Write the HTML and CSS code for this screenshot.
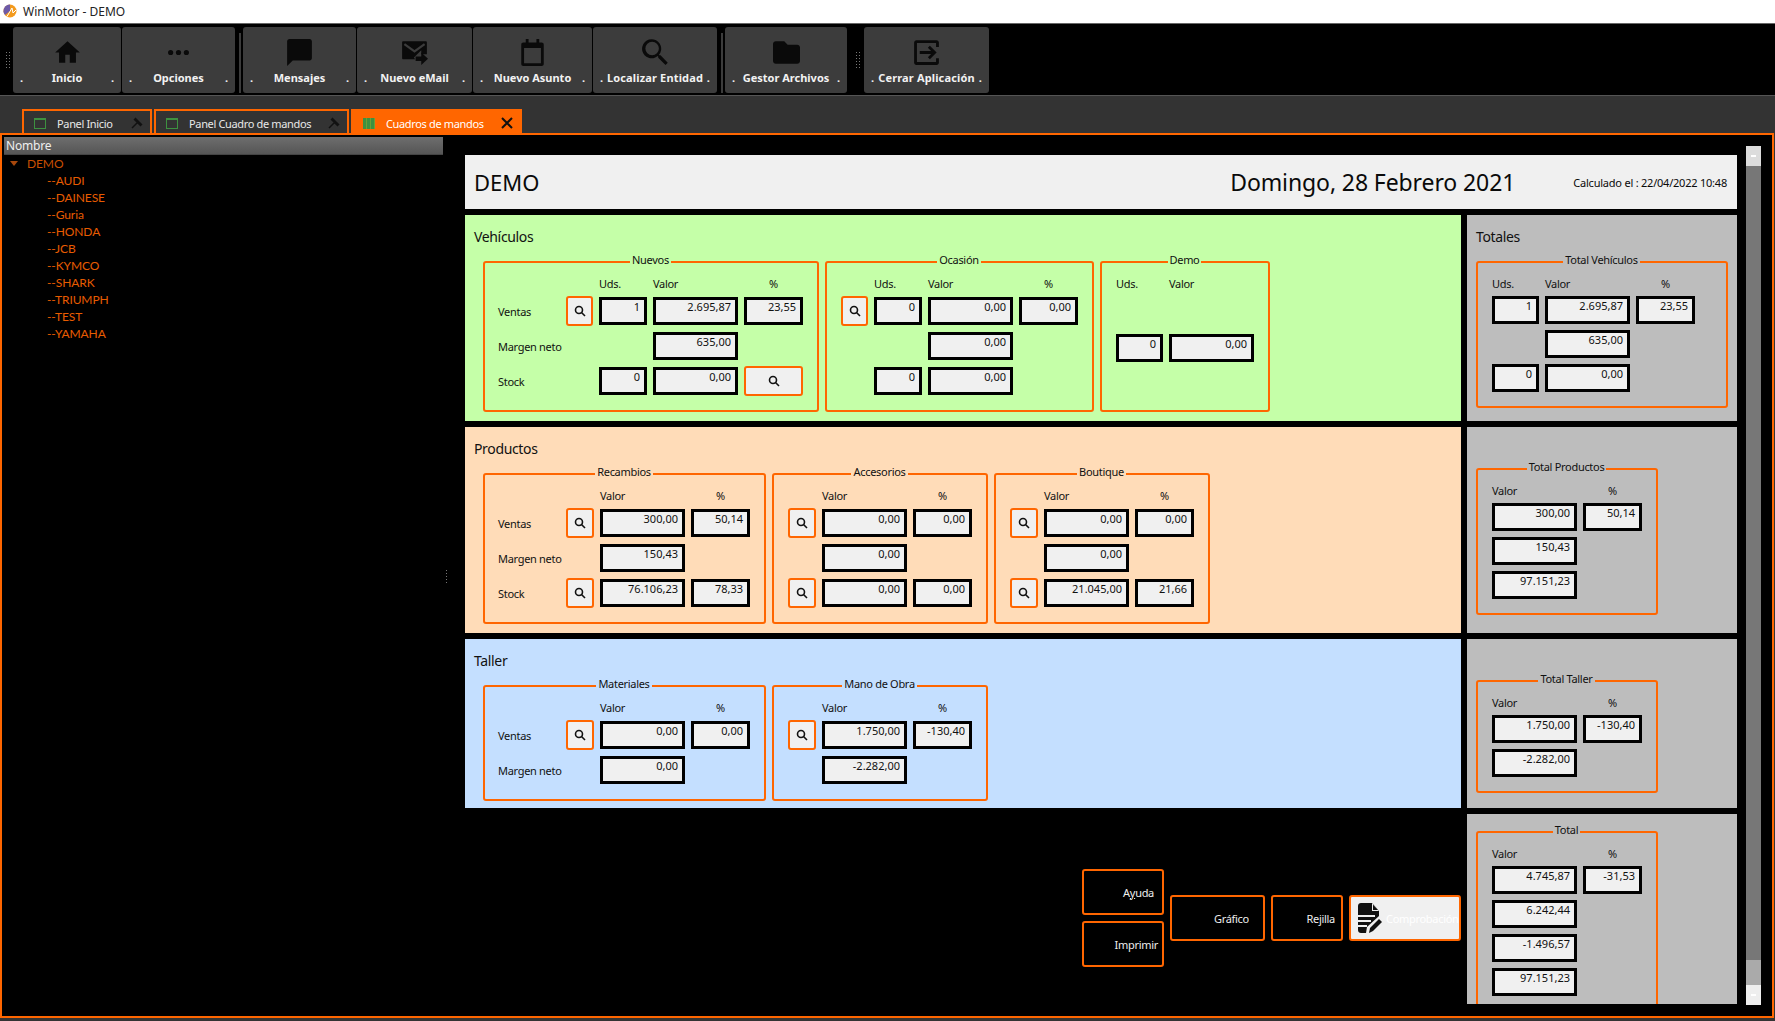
FILE: index.html
```html
<!DOCTYPE html>
<html lang="es">

<head>
    <meta charset="UTF-8">
    <title>WinMotor - DEMO</title>
    <link rel="stylesheet" href="styles.css">
</head>

<body>
    <header class="titlebar">
        <svg class="app-icon" viewBox="0 0 14 14"><circle cx="7" cy="7" r="6.5" fill="#f39a1d"/><path d="M7 .5a6.5 6.5 0 0 0-5 10.6L7 7z" fill="#6d5aa8"/><path d="M4 12.5 9 4l1 5 3-3" fill="none" stroke="#fff" stroke-width="1"/></svg>
        WinMotor - DEMO
    </header>

    <nav class="toolbar">
        <div class="grip"></div>
        <a class="tool tool-inicio">
            <svg viewBox="0 0 24 24"><path d="M10 21v-7h4v7h5.500v-9H23L12 2 1 12h3.500v9z"/></svg>
            <span class="tool-label"><b>.</b><b>Inicio</b><b>.</b></span>
        </a>
        <a class="tool tool-opciones">
            <svg viewBox="0 0 24 24"><circle cx="5" cy="12" r="2.300"/><circle cx="12" cy="12" r="2.300"/><circle cx="19" cy="12" r="2.300"/></svg>
            <span class="tool-label"><b>.</b><b>Opciones</b><b>.</b></span>
        </a>
        <div class="sep"></div>
        <a class="tool tool-mensajes">
            <svg viewBox="0 0 24 24"><path d="M21 0H3C1.900 0 1 .9 1 2v22l5-5h15c1.100 0 2-.9 2-2V2c0-1.100-.9-2-2-2z"/></svg>
            <span class="tool-label"><b>.</b><b>Mensajes</b><b>.</b></span>
        </a>
        <a class="tool tool-email">
            <svg viewBox="0 0 24 24"><path d="M2 2h20c.6 0 1 .4 1 1v10.500h-5V10l-6.500 6.500 1 1.500H2c-.6 0-1-.4-1-1V3c0-.6.4-1 1-1z"/><path d="M3 4.500 12 11l9-6.500" fill="none" stroke="#3c3c3c" stroke-width="2"/><path d="M18 12v3.500h-5v4h5V23l6-5.500z"/></svg>
            <span class="tool-label"><b>.</b><b>Nuevo eMail</b><b>.</b></span>
        </a>
        <a class="tool tool-asunto">
            <svg viewBox="0 0 24 24"><path d="M20 3h-2V0h-2.500v3h-7V0H6v3H4C2.700 3 2 3.800 2 5v17c0 1.200.7 2 2 2h16c1.300 0 2-.8 2-2V5c0-1.200-.7-2-2-2zm-.5 18.500h-15V8h15z"/></svg>
            <span class="tool-label"><b>.</b><b>Nuevo Asunto</b><b>.</b></span>
        </a>
        <a class="tool tool-localizar">
            <svg viewBox="0 0 24 24"><path d="M16.500 14.500h-1l-.4-.4A8.500 8.500 0 1 0 14 15.200l.4.4v1l6.500 6.400 2-2zm-7.500 0a6 6 0 1 1 0-12 6 6 0 0 1 0 12z"/></svg>
            <span class="tool-label"><b>.</b><b>Localizar Entidad</b><b>.</b></span>
        </a>
        <div class="sep"></div>
        <a class="tool tool-gestor">
            <svg viewBox="0 0 24 24"><path d="M10 2H2.500C1.100 2 0 3.100 0 4.500v15C0 20.900 1.100 22 2.500 22h19c1.400 0 2.500-1.100 2.500-2.500v-12C24 6.100 22.900 5 21.500 5H13z"/></svg>
            <span class="tool-label"><b>.</b><b>Gestor Archivos</b><b>.</b></span>
        </a>
        <div class="grip grip-mid"></div>
        <a class="tool tool-cerrar">
            <svg viewBox="0 0 24 24"><path d="M3 1h18c1.100 0 2 .9 2 2v4h-2.500V3.500h-17v17h17V17H23v4c0 1.100-.9 2-2 2H3c-1.100 0-2-.9-2-2V3c0-1.100.9-2 2-2z"/><path d="M15 6l-1.800 1.800 2.900 2.900H6v2.600h10.100l-2.900 2.900L15 18l6-6z"/></svg>
            <span class="tool-label"><b>.</b><b>Cerrar Aplicación</b><b>.</b></span>
        </a>
    </nav>

    <div class="tabstrip">
        <div class="tab tab-inicio">
            <span class="win-icon"></span>
            <span class="tab-text">Panel Inicio</span>
            <svg class="pin" viewBox="0 0 12 12"><path d="M1 11 8 4M4 1l7 7M3 2 10 9" stroke="#111" stroke-width="1.500" fill="none"/></svg>
        </div>
        <div class="tab tab-panel">
            <span class="win-icon"></span>
            <span class="tab-text">Panel Cuadro de mandos</span>
            <svg class="pin" viewBox="0 0 12 12"><path d="M1 11 8 4M4 1l7 7M3 2 10 9" stroke="#111" stroke-width="1.500" fill="none"/></svg>
        </div>
        <div class="tab tab-active">
            <span class="win-icon win-icon-on"></span>
            <span class="tab-text">Cuadros de mandos</span>
            <svg class="pin" viewBox="0 0 12 12"><path d="M1 1l10 10M11 1 1 11" stroke="#111" stroke-width="2" fill="none"/></svg>
        </div>
    </div>

    <div class="frame">
        <aside class="tree">
            <div class="tree-head">Nombre</div>
            <div class="tree-root"><span class="caret"></span>DEMO</div>
            <div class="tree-item">--AUDI</div>
            <div class="tree-item">--DAINESE</div>
            <div class="tree-item">--Guria</div>
            <div class="tree-item">--HONDA</div>
            <div class="tree-item">--JCB</div>
            <div class="tree-item">--KYMCO</div>
            <div class="tree-item">--SHARK</div>
            <div class="tree-item">--TRIUMPH</div>
            <div class="tree-item">--TEST</div>
            <div class="tree-item">--YAMAHA</div>
        </aside>

        <div class="splitter"><div class="splitter-grip"></div></div>

        <main class="dash">
            <div class="dash-head">
                <h1>DEMO</h1>
                <div class="dash-date">Domingo, 28 Febrero 2021</div>
                <div class="dash-calc">Calculado el : 22/04/2022 10:48</div>
            </div>

            <div class="dash-grid">
                <!-- Vehiculos -->
                <section class="panel green">
                    <h2>Vehículos</h2>
                    <div class="groups">
                        <fieldset class="fs fs-nuevos">
                            <legend>Nuevos</legend>
                            <span></span><span></span><span>Uds.</span><span>Valor</span><span class="pct">%</span>
                            <span class="lbl">Ventas</span><button class="find"><svg viewBox="0 0 12 12"><circle cx="5" cy="5" r="3.500"/><path d="M7.500 7.500 11 11"/></svg></button><div class="val">1</div><div class="val">2.695,87</div><div class="val">23,55</div>
                            <span class="lbl">Margen neto</span><span></span><span></span><div class="val">635,00</div><span></span>
                            <span class="lbl">Stock</span><span></span><div class="val">0</div><div class="val">0,00</div><button class="find"><svg viewBox="0 0 12 12"><circle cx="5" cy="5" r="3.500"/><path d="M7.500 7.500 11 11"/></svg></button>
                        </fieldset>
                        <fieldset class="fs fs-ocasion">
                            <legend>Ocasión</legend>
                            <span></span><span>Uds.</span><span>Valor</span><span class="pct">%</span>
                            <button class="find"><svg viewBox="0 0 12 12"><circle cx="5" cy="5" r="3.500"/><path d="M7.500 7.500 11 11"/></svg></button><div class="val">0</div><div class="val">0,00</div><div class="val">0,00</div>
                            <span></span><span></span><div class="val">0,00</div><span></span>
                            <span></span><div class="val">0</div><div class="val">0,00</div><span></span>
                        </fieldset>
                        <fieldset class="fs fs-demo">
                            <legend>Demo</legend>
                            <span>Uds.</span><span>Valor</span>
                            <span></span><span></span>
                            <div class="val">0</div><div class="val">0,00</div>
                        </fieldset>
                    </div>
                </section>
                <section class="panel side">
                    <h2>Totales</h2>
                    <fieldset class="fs fs-totveh">
                        <legend>Total Vehículos</legend>
                        <span>Uds.</span><span>Valor</span><span class="pct">%</span>
                        <div class="val">1</div><div class="val">2.695,87</div><div class="val">23,55</div>
                        <span></span><div class="val">635,00</div><span></span>
                        <div class="val">0</div><div class="val">0,00</div><span></span>
                    </fieldset>
                </section>

                <!-- Productos -->
                <section class="panel peach">
                    <h2>Productos</h2>
                    <div class="groups">
                        <fieldset class="fs fs-lab">
                            <legend>Recambios</legend>
                            <span></span><span></span><span>Valor</span><span class="pct">%</span>
                            <span class="lbl">Ventas</span><button class="find"><svg viewBox="0 0 12 12"><circle cx="5" cy="5" r="3.500"/><path d="M7.500 7.500 11 11"/></svg></button><div class="val">300,00</div><div class="val">50,14</div>
                            <span class="lbl">Margen neto</span><span></span><div class="val">150,43</div><span></span>
                            <span class="lbl">Stock</span><button class="find"><svg viewBox="0 0 12 12"><circle cx="5" cy="5" r="3.500"/><path d="M7.500 7.500 11 11"/></svg></button><div class="val">76.106,23</div><div class="val">78,33</div>
                        </fieldset>
                        <fieldset class="fs fs-plain">
                            <legend>Accesorios</legend>
                            <span></span><span>Valor</span><span class="pct">%</span>
                            <button class="find"><svg viewBox="0 0 12 12"><circle cx="5" cy="5" r="3.500"/><path d="M7.500 7.500 11 11"/></svg></button><div class="val">0,00</div><div class="val">0,00</div>
                            <span></span><div class="val">0,00</div><span></span>
                            <button class="find"><svg viewBox="0 0 12 12"><circle cx="5" cy="5" r="3.500"/><path d="M7.500 7.500 11 11"/></svg></button><div class="val">0,00</div><div class="val">0,00</div>
                        </fieldset>
                        <fieldset class="fs fs-plain">
                            <legend>Boutique</legend>
                            <span></span><span>Valor</span><span class="pct">%</span>
                            <button class="find"><svg viewBox="0 0 12 12"><circle cx="5" cy="5" r="3.500"/><path d="M7.500 7.500 11 11"/></svg></button><div class="val">0,00</div><div class="val">0,00</div>
                            <span></span><div class="val">0,00</div><span></span>
                            <button class="find"><svg viewBox="0 0 12 12"><circle cx="5" cy="5" r="3.500"/><path d="M7.500 7.500 11 11"/></svg></button><div class="val">21.045,00</div><div class="val">21,66</div>
                        </fieldset>
                    </div>
                </section>
                <section class="panel side side-notitle">
                    <fieldset class="fs fs-tot">
                        <legend>Total Productos</legend>
                        <span>Valor</span><span class="pct">%</span>
                        <div class="val">300,00</div><div class="val">50,14</div>
                        <div class="val">150,43</div><span></span>
                        <div class="val">97.151,23</div><span></span>
                    </fieldset>
                </section>

                <!-- Taller -->
                <section class="panel blue">
                    <h2>Taller</h2>
                    <div class="groups">
                        <fieldset class="fs fs-lab">
                            <legend>Materiales</legend>
                            <span></span><span></span><span>Valor</span><span class="pct">%</span>
                            <span class="lbl">Ventas</span><button class="find"><svg viewBox="0 0 12 12"><circle cx="5" cy="5" r="3.500"/><path d="M7.500 7.500 11 11"/></svg></button><div class="val">0,00</div><div class="val">0,00</div>
                            <span class="lbl">Margen neto</span><span></span><div class="val">0,00</div><span></span>
                        </fieldset>
                        <fieldset class="fs fs-plain">
                            <legend>Mano de Obra</legend>
                            <span></span><span>Valor</span><span class="pct">%</span>
                            <button class="find"><svg viewBox="0 0 12 12"><circle cx="5" cy="5" r="3.500"/><path d="M7.500 7.500 11 11"/></svg></button><div class="val">1.750,00</div><div class="val">-130,40</div>
                            <span></span><div class="val">-2.282,00</div><span></span>
                        </fieldset>
                    </div>
                </section>
                <section class="panel side side-notitle">
                    <fieldset class="fs fs-tot">
                        <legend>Total Taller</legend>
                        <span>Valor</span><span class="pct">%</span>
                        <div class="val">1.750,00</div><div class="val">-130,40</div>
                        <div class="val">-2.282,00</div><span></span>
                    </fieldset>
                </section>

                <!-- botones y total general -->
                <div class="actions">
                    <div class="action-col">
                        <button class="action action-small">A<u>y</u>uda</button>
                        <button class="action action-small action-print">Imprimir</button>
                    </div>
                    <button class="action action-chart"><span class="clip">Gráficos</span></button>
                    <button class="action action-grid">Rejilla</button>
                    <button class="action action-check">
                        <svg viewBox="0 0 24 30"><path d="M3 0h11l7 8v5L9 24l-1 6H3c-1.700 0-3-1.300-3-3V3c0-1.700 1.300-3 3-3z" fill="#111"/><path d="M14 0v8h7z" fill="#f0f0f0"/><path d="M15 1.500V7h5z" fill="#111"/><path d="M0 13h17M0 18h13M0 23h9" stroke="#f0f0f0" stroke-width="2"/><path d="M11 30l1-5 9-9 3 3-9 9z" fill="#111"/></svg>
                        <span>Comprobación</span>
                    </button>
                </div>
                <section class="panel side side-total">
                    <fieldset class="fs fs-tot fs-grand">
                        <legend>Total</legend>
                        <span>Valor</span><span class="pct">%</span>
                        <div class="val">4.745,87</div><div class="val">-31,53</div>
                        <div class="val">6.242,44</div><span></span>
                        <div class="val">-1.496,57</div><span></span>
                        <div class="val">97.151,23</div><span></span>
                    </fieldset>
                </section>
            </div>
        </main>

        <div class="scrollbar">
            <div class="scroll-arrow"></div>
            <div class="scroll-track"></div>
            <div class="scroll-thumb"></div>
            <div class="scroll-arrow scroll-arrow-end"></div>
        </div>
    </div>
</body>

</html>
```

FILE: styles.css
```css
* {
    box-sizing: border-box;
}

html, body {
    height: 100%;
}

body {
    margin: 0;
    height: 1021px;
    overflow: hidden;
    background-color: #333;
    font-family: "Noto Sans", sans-serif;
    font-size: 11px;
    color: #111;
}

/* title bar */
.titlebar {
    height: 24px;
    display: flex;
    align-items: center;
    gap: 6px;
    padding: 0 0 1px 3px;
    background-color: #fff;
    border-bottom: 1px solid #666;
    font-size: 12px;
    color: #222;
}

.app-icon {
    width: 14px;
    height: 14px;
}

/* toolbar */
.toolbar {
    height: 71px;
    display: flex;
    align-items: flex-start;
    padding: 3px 0 0 5px;
    background-color: #000;
}

.grip {
    width: 6px;
    height: 18px;
    margin: 24px 2px 0 0;
    background-image: radial-gradient(#777 1px, transparent 1px);
    background-size: 3px 3px;
}

.grip-mid {
    margin: 24px 3px 0 7px;
}

.sep {
    width: 2px;
    height: 60px;
    margin: 6px 2px 0 3px;
    background-color: #3c3c3c;
}

.tool {
    height: 66px;
    margin-right: 1px;
    display: flex;
    flex-direction: column;
    align-items: center;
    padding: 12px 7px 0;
    background-color: #3c3c3c;
    border-radius: 3px;
}

.tool svg {
    width: 27px;
    height: 27px;
    fill: #0a0a0a;
}

.tool-label {
    width: 100%;
    margin-top: 4px;
    display: flex;
    justify-content: space-between;
    color: #f2f2f2;
    font-size: 11px;
    line-height: 16px;
    white-space: nowrap;
}

.tool-inicio { width: 108px; }
.tool-opciones { width: 113px; }
.tool-mensajes { width: 113px; }
.tool-email { width: 115px; }
.tool-asunto { width: 119px; }
.tool-localizar { width: 124px; }
.tool-gestor { width: 122px; }
.tool-cerrar { width: 125px; }

.tool-localizar .tool-label,
.tool-cerrar .tool-label {
    letter-spacing: .15px;
}

/* tabs */
.tabstrip {
    height: 38px;
    display: flex;
    align-items: flex-end;
    gap: 2px;
    padding-left: 22px;
    background-color: #333;
    border-top: 1px solid #555;
}

.tab {
    height: 26px;
    margin-bottom: -2px;
    display: flex;
    align-items: center;
    padding: 0 7px 0 10px;
    border: 2px solid #ff6600;
    border-bottom: 0;
    color: #e8e8e8;
}

.tab-inicio { width: 130px; }
.tab-panel { width: 195px; }

.tab-active {
    width: 171px;
    background-color: #ff6600;
    color: #fff;
}

.tab-text {
    flex: 1;
    margin-left: 11px;
    letter-spacing: -.35px;
    white-space: nowrap;
}

.win-icon {
    width: 12px;
    height: 11px;
    border: 1px solid #3d9140;
    border-top-width: 2px;
}

.win-icon-on {
    border: 0;
    background: repeating-linear-gradient(90deg, #3d9140 0 3px, #6aa038 3px 4px);
}

.pin {
    width: 12px;
    height: 12px;
}

/* main frame */
.frame {
    height: 885px;
    width: 1774px;
    display: flex;
    align-items: flex-start;
    background-color: #000;
    border: 2px solid #ff6600;
}

.tree {
    width: 441px;
    height: 100%;
    padding: 2px 0 0 2px;
}

.tree-head {
    height: 18px;
    padding-left: 2px;
    background: linear-gradient(#6e6e6e, #555);
    border-bottom: 1px solid #444;
    color: #eee;
    font-size: 12px;
    line-height: 18px;
    letter-spacing: -.2px;
}

.tree-root,
.tree-item {
    height: 17px;
    font-family: Lato, sans-serif;
    font-size: 12px;
    line-height: 17px;
    letter-spacing: -.1px;
}

.tree-root {
    padding-left: 23px;
    position: relative;
    color: #c94f00;
}

.tree-item {
    padding-left: 43px;
    color: #e85c00;
}

.caret {
    position: absolute;
    left: 6px;
    top: 6px;
    border: 4px solid transparent;
    border-top: 5px solid #a8480c;
}

.splitter {
    width: 22px;
    height: 100%;
    padding: 434px 0 0 2px;
}

.splitter-grip {
    width: 3px;
    height: 16px;
    background-image: radial-gradient(#777 1px, transparent 1px);
    background-size: 3px 3px;
}

.dash {
    width: 1272px;
    height: 870px;
    padding-top: 20px;
    overflow: hidden;
}

.dash-head {
    height: 54px;
    display: flex;
    align-items: center;
    padding: 0 10px 0 9px;
    background-color: #f0f0f0;
    color: #0a0a0a;
}

.dash-head h1 {
    flex: 1;
    margin: 0;
    font-size: 22px;
    font-weight: 400;
}

.dash-date {
    margin-right: 58px;
    font-size: 23px;
    letter-spacing: -.1px;
}

.dash-calc {
    font-size: 11px;
    letter-spacing: -.22px;
}

.dash-grid {
    margin-top: 6px;
    display: grid;
    grid-template-columns: 996px 270px;
    grid-template-rows: 206px 206px 169px 190px;
    column-gap: 6px;
    row-gap: 6px;
}

/* panels */
.panel {
    padding: 12px 9px 0;
    overflow: hidden;
}

.panel h2 {
    height: 20px;
    margin: 0 0 6px;
    font-size: 14px;
    font-weight: 400;
    line-height: 20px;
    letter-spacing: -.35px;
}

.green { background-color: #c5ffa8; }
.peach { background-color: #ffdcb8; }
.blue { background-color: #c4dfff; }
.side { background-color: #bdbdbd; }

.side-notitle { padding-top: 33px; }
.side-total { padding-top: 9px; }

.groups {
    display: flex;
    gap: 6px;
    margin-left: 9px;
}

/* field groups */
.fs {
    margin: 0;
    min-width: 0;
    display: grid;
    grid-auto-rows: 28px;
    grid-template-rows: 14px;
    column-gap: 6px;
    row-gap: 7px;
    padding: 5px 15px 15px 14px;
    border: 2px solid #ff6600;
    border-radius: 3px;
    line-height: 14px;
}

.fs legend {
    margin: 0 auto;
    padding: 0 2px 4px;
    font-size: 11px;
    line-height: 14px;
    letter-spacing: -.3px;
    color: #111;
}

.fs > span {
    padding-top: 1px;
    letter-spacing: -.3px;
}

.fs-nuevos {
    width: 336px;
    grid-template-columns: 61px 27px 48px 85px 59px;
}

.fs-ocasion {
    width: 269px;
    grid-template-columns: 27px 48px 85px 59px;
}

.fs-demo {
    width: 170px;
    grid-template-columns: 47px 85px;
    grid-template-rows: 14px 30px;
}

.fs-lab {
    width: 283px;
    grid-template-columns: 61px 28px 85px 59px;
}

.fs-plain {
    width: 216px;
    grid-template-columns: 28px 85px 59px;
}

.fs-totveh {
    width: 252px;
    grid-template-columns: 47px 85px 59px;
    row-gap: 6px;
    padding-bottom: 14px;
}

.fs-tot {
    width: 182px;
    grid-template-columns: 85px 59px;
    row-gap: 6px;
    padding-bottom: 14px;
}

.fs-grand {
    padding-bottom: 30px;
}

.pct {
    text-align: center;
}

.lbl {
    align-self: center;
    margin-left: -1px;
    white-space: nowrap;
}

.val {
    padding-right: 4px;
    background-color: #f0f0f0;
    border: 3px solid #000;
    text-align: right;
    line-height: 14px;
    white-space: nowrap;
}

.find {
    height: 30px;
    margin: -1px 0;
    padding: 0;
    display: flex;
    align-items: center;
    justify-content: center;
    background-color: #f0f0f0;
    border: 2px solid #ff6600;
    border-radius: 3px;
}

.find svg {
    width: 12px;
    height: 12px;
    fill: none;
    stroke: #111;
    stroke-width: 1.600;
}

/* bottom buttons */
.actions {
    display: flex;
    justify-content: flex-end;
    align-items: flex-start;
    gap: 6px;
    padding-top: 55px;
}

.action-col {
    display: flex;
    flex-direction: column;
    gap: 6px;
}

.action {
    height: 46px;
    padding: 0 6px 0 0;
    background-color: #000;
    border: 2px solid #ff6600;
    border-radius: 3px;
    color: #eee;
    font-family: inherit;
    font-size: 11px;
    letter-spacing: -.3px;
    text-align: right;
}

.action-small {
    width: 82px;
    padding-right: 8px;
}

.action-print {
    padding-right: 4px;
}

.action-chart {
    width: 95px;
    margin-top: 26px;
    padding-right: 14px;
}

.clip {
    display: inline-block;
    width: 35px;
    overflow: hidden;
    white-space: nowrap;
    text-align: left;
    vertical-align: middle;
}

.action-grid {
    width: 72px;
    margin-top: 26px;
}

.action-check {
    width: 112px;
    margin-top: 26px;
    padding: 0 5px 0 7px;
    display: flex;
    align-items: center;
    gap: 4px;
    background-color: #f0f0f0;
    color: #fff;
}

.action-check svg {
    width: 24px;
    height: 30px;
    flex: none;
}

/* scrollbar */
.scrollbar {
    width: 15px;
    height: 859px;
    margin: 11px 0 0 9px;
    display: flex;
    flex-direction: column;
    background-color: #777;
}

.scroll-arrow {
    height: 20px;
    background: linear-gradient(#fff, #fff) center / 5px 2px no-repeat #dcdcdc;
}

.scroll-arrow-end {
    background-color: #eee;
}

.scroll-track {
    flex: 1;
}

.scroll-thumb {
    height: 25px;
    background-color: #aaa;
}
```
